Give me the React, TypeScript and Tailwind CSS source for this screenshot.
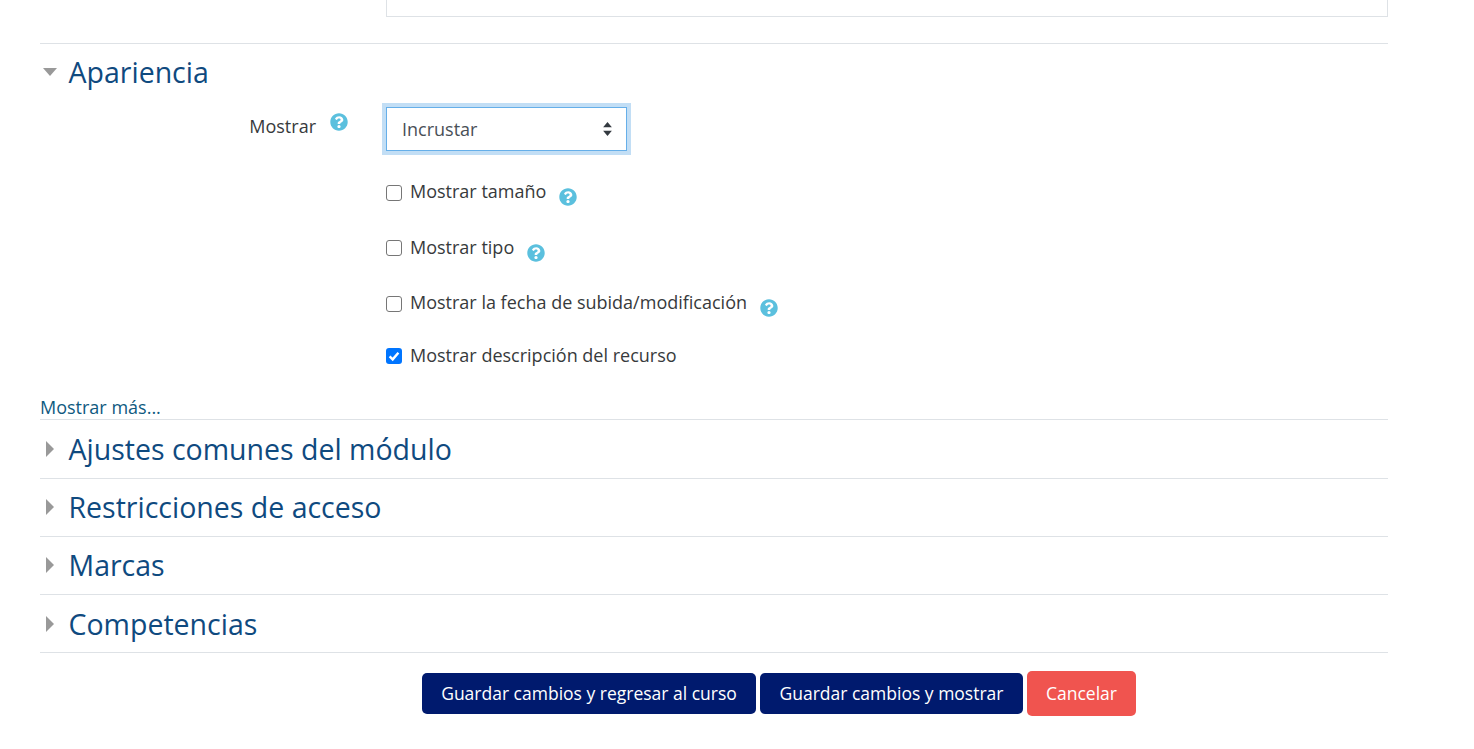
import { FaQuestionCircle } from "react-icons/fa";

function Help({ className }: { className: string }) {
	return <FaQuestionCircle className={`absolute size-[18px] text-[#5bc0de] ${className}`} />;
}

function CheckRow({
	label,
	checked,
	rowClass,
	boxClass,
	help,
}: {
	label: string;
	checked?: boolean;
	rowClass: string;
	boxClass: string;
	help?: boolean;
}) {
	return (
		<div className={`flex items-center ${rowClass}`}>
			{checked ? (
				<span className={`flex size-4 items-center justify-center rounded-[3px] bg-[#0075ff] ${boxClass}`}>
					<svg viewBox="0 0 16 16" className="size-4" fill="none" stroke="#fff" strokeWidth="2.4">
						<path d="M3.6 8.4 6.7 11.4 12.4 4.8" />
					</svg>
				</span>
			) : (
				<span className={`size-4 rounded-[3px] border border-[#767676] bg-white ${boxClass}`} />
			)}
			<span className="relative ml-2 text-[18px] leading-6 text-[#373a3c]">
				{label}
				{help && <Help className="top-[9px] left-[calc(100%+13px)]" />}
			</span>
		</div>
	);
}

function Section({ title, rowClass }: { title: string; rowClass: string }) {
	return (
		<div className={`flex items-center border-b border-[#dee2e6] ${rowClass}`}>
			<svg viewBox="0 0 8 16" className="ml-[6px] h-4 w-2" fill="#999999">
				<path d="M0 0 8 8 0 16Z" />
			</svg>
			<h3 className="ml-[14.5px] text-[28.5px] leading-[34px] text-[#0f4a7f]">{title}</h3>
		</div>
	);
}

export default function App() {
	return (
		<div className="min-h-[749px] bg-white font-['Open_Sans',sans-serif]">
			<div className="ml-10 w-[1348px]">
				<div className="ml-[346px] h-[17px] border-x border-b border-[#dee2e6]" />

				<div className="mt-[26px] border-t border-[#dee2e6]">
					<div className="flex h-[56px] items-center">
						<svg viewBox="0 0 14 8" className="ml-[3px] h-2 w-[14px]" fill="#999999">
							<path d="M0 0H14L7 8Z" />
						</svg>
						<h3 className="ml-[11.5px] text-[28.5px] leading-[34px] text-[#0f4a7f]">Apariencia</h3>
					</div>

					<div className="flex">
						<div className="w-[276px] pt-[14px] text-right text-[18px] leading-6 text-[#373a3c]">Mostrar</div>
						<div className="relative w-[70px]">
							<Help className="top-[13px] left-[14px]" />
						</div>
						<div>
							<div className="mt-[7px] flex h-[44px] w-[241px] items-center justify-between border border-[#66afe9] bg-white pr-[14px] pl-[15px] text-[18px] text-[#495057] shadow-[0_0_0_4px_#c2def5]">
								<span>Incrustar</span>
								<svg viewBox="0 0 10 16" className="h-[14px] w-[9px]" fill="#343a40">
									<path d="M5 0 10 6H0ZM0 10H10L5 16Z" />
								</svg>
							</div>
							<CheckRow label="Mostrar tamaño" rowClass="mt-[28px]" boxClass="translate-y-[2px]" help />
							<CheckRow label="Mostrar tipo" rowClass="mt-[32px]" boxClass="translate-y-px" help />
							<CheckRow label="Mostrar la fecha de subida/modificación" rowClass="mt-[31px]" boxClass="translate-y-[2px]" help />
							<CheckRow label="Mostrar descripción del recurso" rowClass="mt-[29px]" boxClass="translate-y-px" checked />
						</div>
					</div>

					<div className="mt-[28px] border-b border-[#dee2e6] text-[18px] leading-[24px] text-[#0f5a7f]">
						Mostrar más...
					</div>
				</div>

				<Section title="Ajustes comunes del módulo" rowClass="h-[59px]" />
				<Section title="Restricciones de acceso" rowClass="h-[58px] pb-[2px]" />
				<Section title="Marcas" rowClass="h-[58px] pb-[2px]" />
				<Section title="Competencias" rowClass="h-[58px]" />

				<div className="mt-[18px] ml-[382px] flex items-center gap-1 text-[17.5px] text-white">
					<button className="h-[41px] w-[334px] rounded-[5px] bg-[#001a6e]">Guardar cambios y regresar al curso</button>
					<button className="h-[41px] w-[263px] rounded-[5px] bg-[#001a6e]">Guardar cambios y mostrar</button>
					<button className="h-[45px] w-[109px] rounded-[5px] bg-[#f0544f]">Cancelar</button>
				</div>
			</div>
		</div>
	);
}
